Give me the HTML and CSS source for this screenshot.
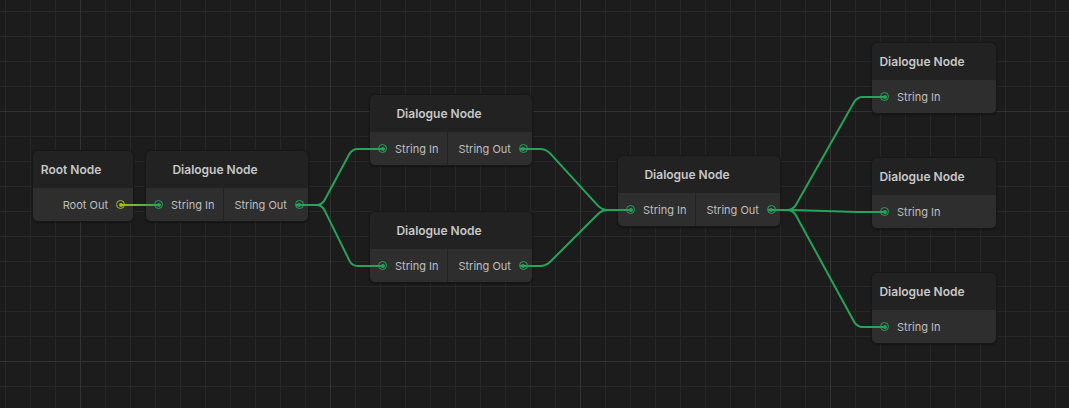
FILE: index.html
```html
<!DOCTYPE html>
<html>
<head>
<meta charset="utf-8">
<link rel="stylesheet" href="styles.css">
</head>
<body>
<div class="canvas">
  <div class="node n-root">
    <div class="title"><span>Root Node</span></div>
    <div class="body">
      <div class="port out full"><span class="label">Root Out</span><span class="conn yellow"></span></div>
    </div>
  </div>
  <div class="node n-1">
    <div class="title"><span>Dialogue Node</span></div>
    <div class="body">
      <div class="port in"><span class="conn"></span><span class="label">String In</span></div>
      <div class="port out"><span class="label">String Out</span><span class="conn"></span></div>
    </div>
  </div>
  <div class="node n-2">
    <div class="title"><span>Dialogue Node</span></div>
    <div class="body">
      <div class="port in"><span class="conn"></span><span class="label">String In</span></div>
      <div class="port out"><span class="label">String Out</span><span class="conn"></span></div>
    </div>
  </div>
  <div class="node n-3">
    <div class="title"><span>Dialogue Node</span></div>
    <div class="body">
      <div class="port in"><span class="conn"></span><span class="label">String In</span></div>
      <div class="port out"><span class="label">String Out</span><span class="conn"></span></div>
    </div>
  </div>
  <div class="node n-c">
    <div class="title"><span>Dialogue Node</span></div>
    <div class="body">
      <div class="port in"><span class="conn"></span><span class="label">String In</span></div>
      <div class="port out"><span class="label">String Out</span><span class="conn"></span></div>
    </div>
  </div>
  <div class="node n-r n-r1">
    <div class="title"><span>Dialogue Node</span></div>
    <div class="body">
      <div class="port in full"><span class="conn"></span><span class="label">String In</span></div>
    </div>
  </div>
  <div class="node n-r n-r2">
    <div class="title"><span>Dialogue Node</span></div>
    <div class="body">
      <div class="port in full"><span class="conn"></span><span class="label">String In</span></div>
    </div>
  </div>
  <div class="node n-r n-r3">
    <div class="title"><span>Dialogue Node</span></div>
    <div class="body">
      <div class="port in full"><span class="conn"></span><span class="label">String In</span></div>
    </div>
  </div>

  <svg class="edges" width="1069" height="408" viewBox="0 0 1069 408">
    <defs>
      <linearGradient id="rootgrad" gradientUnits="userSpaceOnUse" x1="121" y1="0" x2="158" y2="0">
        <stop offset="0" stop-color="#a3bf22"/>
        <stop offset="1" stop-color="#26a35b"/>
      </linearGradient>
    </defs>
    <path class="edge root" d="M121 205 L158 205"/>
    <path class="edge" d="M296 205 L316 205 Q322 205 324.8 199.7 L349.2 154.3 Q352 149 358 149 L382 149"/>
    <path class="edge" d="M296 205 L316 205 Q322 205 324.6 210.4 L349.4 260.6 Q352 266 358 266 L382 266"/>
    <path class="edge" d="M520 149 L540 149 Q546 149 550.1 153.4 L597.9 205.6 Q602 210 608 210 L630 210"/>
    <path class="edge" d="M520 266 L540 266 Q546 266 550.2 261.8 L597.8 214.2 Q602 210 608 210 L630 210"/>
    <path class="edge" d="M768 210 L787 210 Q793 210 796 204.8 L854 102.2 Q857 97 863 97 L884 97"/>
    <path class="edge" d="M768 210 L793 210 L857 212 L884 212"/>
    <path class="edge" d="M768 210 L787 210 Q793 210 795.9 215.3 L854.1 321.7 Q857 327 863 327 L884 327"/>
  </svg>
</div>
</body>
</html>
```
FILE: styles.css
```css
* { box-sizing: border-box; }
html, body { margin: 0; padding: 0; background: #1c1c1c; }
.canvas {
  position: relative;
  width: 1069px;
  height: 408px;
  overflow: hidden;
  background-color: #1c1c1c;
  background-image:
    linear-gradient(to right, #323232 1px, transparent 1px),
    linear-gradient(to bottom, #323232 1px, transparent 1px),
    linear-gradient(to right, #272727 1px, transparent 1px),
    linear-gradient(to bottom, #272727 1px, transparent 1px);
  background-size: 250px 100%, 100% 250px, 25px 100%, 100% 25px;
  background-position: 80px 0, 0 111px, 5px 0, 0 11px;
  font-family: Inter, "Noto Sans", sans-serif;
}
.node {
  position: absolute;
  height: 72px;
  border: 1px solid #171717;
  border-radius: 6px;
  overflow: hidden;
  display: flex;
  flex-direction: column;
  box-shadow: 0 1px 2px rgba(0,0,0,0.35);
}
.n-root { left: 32px; top: 150px; width: 102px; }
.n-1 { left: 145px; top: 150px; width: 164px; }
.n-2 { left: 369px; top: 94px; width: 164px; }
.n-3 { left: 369px; top: 211px; width: 164px; }
.n-c { left: 617px; top: 155px; width: 164px; }
.n-r { left: 871px; width: 126px; }
.n-r1 { top: 42px; }
.n-r2 { top: 157px; }
.n-r3 { top: 272px; }

.title {
  height: 37px;
  flex: none;
  display: flex;
  align-items: center;
  background: #222222;
  color: #c8c8c8;
  font-size: 12px;
  font-weight: 600;
}
.title span { flex: 1; text-align: center; white-space: nowrap; }
.title::after { content: ""; width: 24px; flex: none; }

.body {
  flex: 1;
  display: flex;
  background: #2e2e2e;
}
.port {
  display: flex;
  align-items: center;
  color: #bebebe;
  font-size: 11px;
  white-space: nowrap;
}
.port.in { padding: 0 9px 0 8px; border-right: 1px solid #232323; }
.port.out { flex: 1; justify-content: flex-end; padding: 0 8px 0 10px; }
.port.in.full { flex: 1; border-right: none; }
.conn {
  width: 9px;
  height: 9px;
  border-radius: 50%;
  border: 1.5px solid #26a35b;
  display: flex;
  align-items: center;
  justify-content: center;
  flex: none;
}
.conn::after {
  content: "";
  width: 4px;
  height: 4px;
  border-radius: 50%;
  background: #26a35b;
}
.conn.yellow { border-color: #a3bf22; }
.conn.yellow::after { background: #a3bf22; }
.port.in .conn { margin-right: 8px; }
.port.out .conn { margin-left: 8px; }

.edges {
  position: absolute;
  left: 0;
  top: 0;
  pointer-events: none;
}
.edge {
  fill: none;
  stroke: #26a35b;
  stroke-width: 2;
  stroke-linejoin: round;
}
.edge.root { stroke: url(#rootgrad); }
```
